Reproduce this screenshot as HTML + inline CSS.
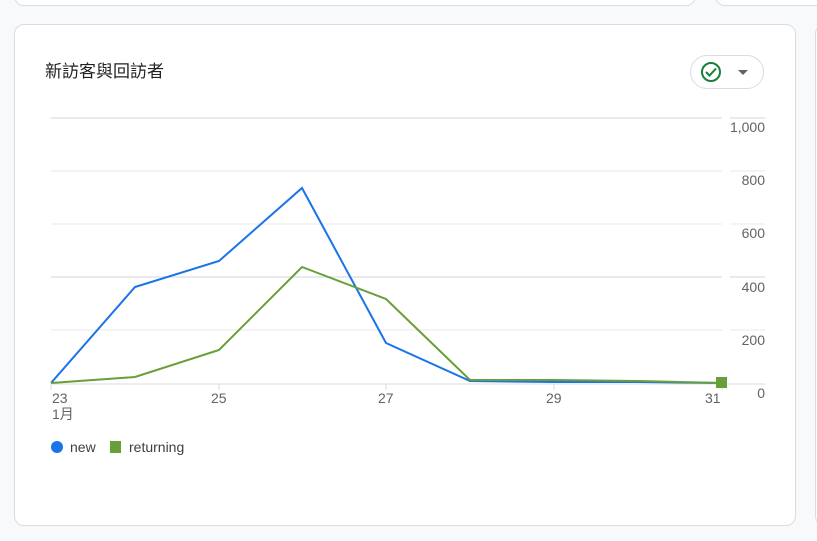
<!DOCTYPE html>
<html><head><meta charset="utf-8"><style>
body{margin:0;width:817px;height:541px;background:#f8f9fa;position:relative;overflow:hidden;font-family:"Liberation Sans","Noto Sans CJK TC",sans-serif;}
.card{position:absolute;background:#fff;border:1px solid #dadce0;border-radius:10px;box-sizing:border-box;}
.t{position:absolute;color:#5f6368;font-size:14px;}
</style></head><body>
<div class="card" style="left:14px;top:-20px;width:682px;height:26px"></div>
<div class="card" style="left:715px;top:-20px;width:120px;height:26px"></div>
<div class="card" style="left:815px;top:24px;width:40px;height:502px"></div>
<div class="card" style="left:14px;top:24px;width:782px;height:502px"></div>
<div style="position:absolute;left:45px;top:57px;font-size:17px;color:#202124">新訪客與回訪者</div>
<div style="position:absolute;left:690px;top:55px;width:74px;height:34px;border:1px solid #dadce0;border-radius:17px;box-sizing:border-box"></div>
<svg width="817" height="541" style="position:absolute;left:0;top:0">
<circle cx="711" cy="72" r="9" fill="none" stroke="#188038" stroke-width="2"/>
<path d="M706 72 l3.5 3.5 l6.5 -7" fill="none" stroke="#188038" stroke-width="2"/>
<path d="M738 70 h10 l-5 5z" fill="#5f6368"/>
<g stroke="#e8eaed" stroke-width="1">
<line x1="51" y1="118" x2="722" y2="118" stroke-width="2"/><line x1="730" y1="118" x2="765" y2="118" stroke-width="2"/>
<line x1="51" y1="171" x2="722" y2="171"/><line x1="730" y1="171" x2="765" y2="171"/>
<line x1="51" y1="224" x2="722" y2="224"/><line x1="730" y1="224" x2="765" y2="224"/>
<line x1="51" y1="277" x2="722" y2="277" stroke-width="2"/><line x1="730" y1="277" x2="765" y2="277" stroke-width="2"/>
<line x1="51" y1="330" x2="722" y2="330"/><line x1="730" y1="330" x2="765" y2="330"/>
<line x1="51" y1="384" x2="765" y2="384" stroke="#dadce0"/>
<line x1="51" y1="384" x2="51" y2="390" stroke="#dadce0"/><line x1="219" y1="384" x2="219" y2="390" stroke="#dadce0"/><line x1="386" y1="384" x2="386" y2="390" stroke="#dadce0"/><line x1="554" y1="384" x2="554" y2="390" stroke="#dadce0"/><line x1="722" y1="384" x2="722" y2="390" stroke="#dadce0"/>
</g>
<polyline points="51,383 135,287 219,261 302,188 386,343 470,381 554,382 638,382 722,383" fill="none" stroke="#1a73e8" stroke-width="2"/>
<polyline points="51,383 135,377 219,350 302,267 386,299 470,380 554,380 638,381 722,383" fill="none" stroke="#689f38" stroke-width="2"/>
<rect x="716" y="377" width="11" height="11" fill="#689f38"/>
<circle cx="57" cy="447" r="6" fill="#1a73e8"/>
<rect x="110" y="441" width="11" height="12" fill="#689f38"/>
</svg>
<div class="t" style="right:52px;top:119px">1,000</div>
<div class="t" style="right:52px;top:172px">800</div>
<div class="t" style="right:52px;top:225px">600</div>
<div class="t" style="right:52px;top:279px">400</div>
<div class="t" style="right:52px;top:332px">200</div>
<div class="t" style="right:52px;top:385px">0</div>
<div class="t" style="left:52px;top:390px;line-height:16px">23<br>1月</div>
<div class="t" style="left:211px;top:390px">25</div>
<div class="t" style="left:378px;top:390px">27</div>
<div class="t" style="left:546px;top:390px">29</div>
<div class="t" style="left:705px;top:390px">31</div>
<div style="position:absolute;left:70px;top:439px;font-size:14px;color:#3c4043">new</div>
<div style="position:absolute;left:129px;top:439px;font-size:14px;color:#3c4043">returning</div>
</body></html>
